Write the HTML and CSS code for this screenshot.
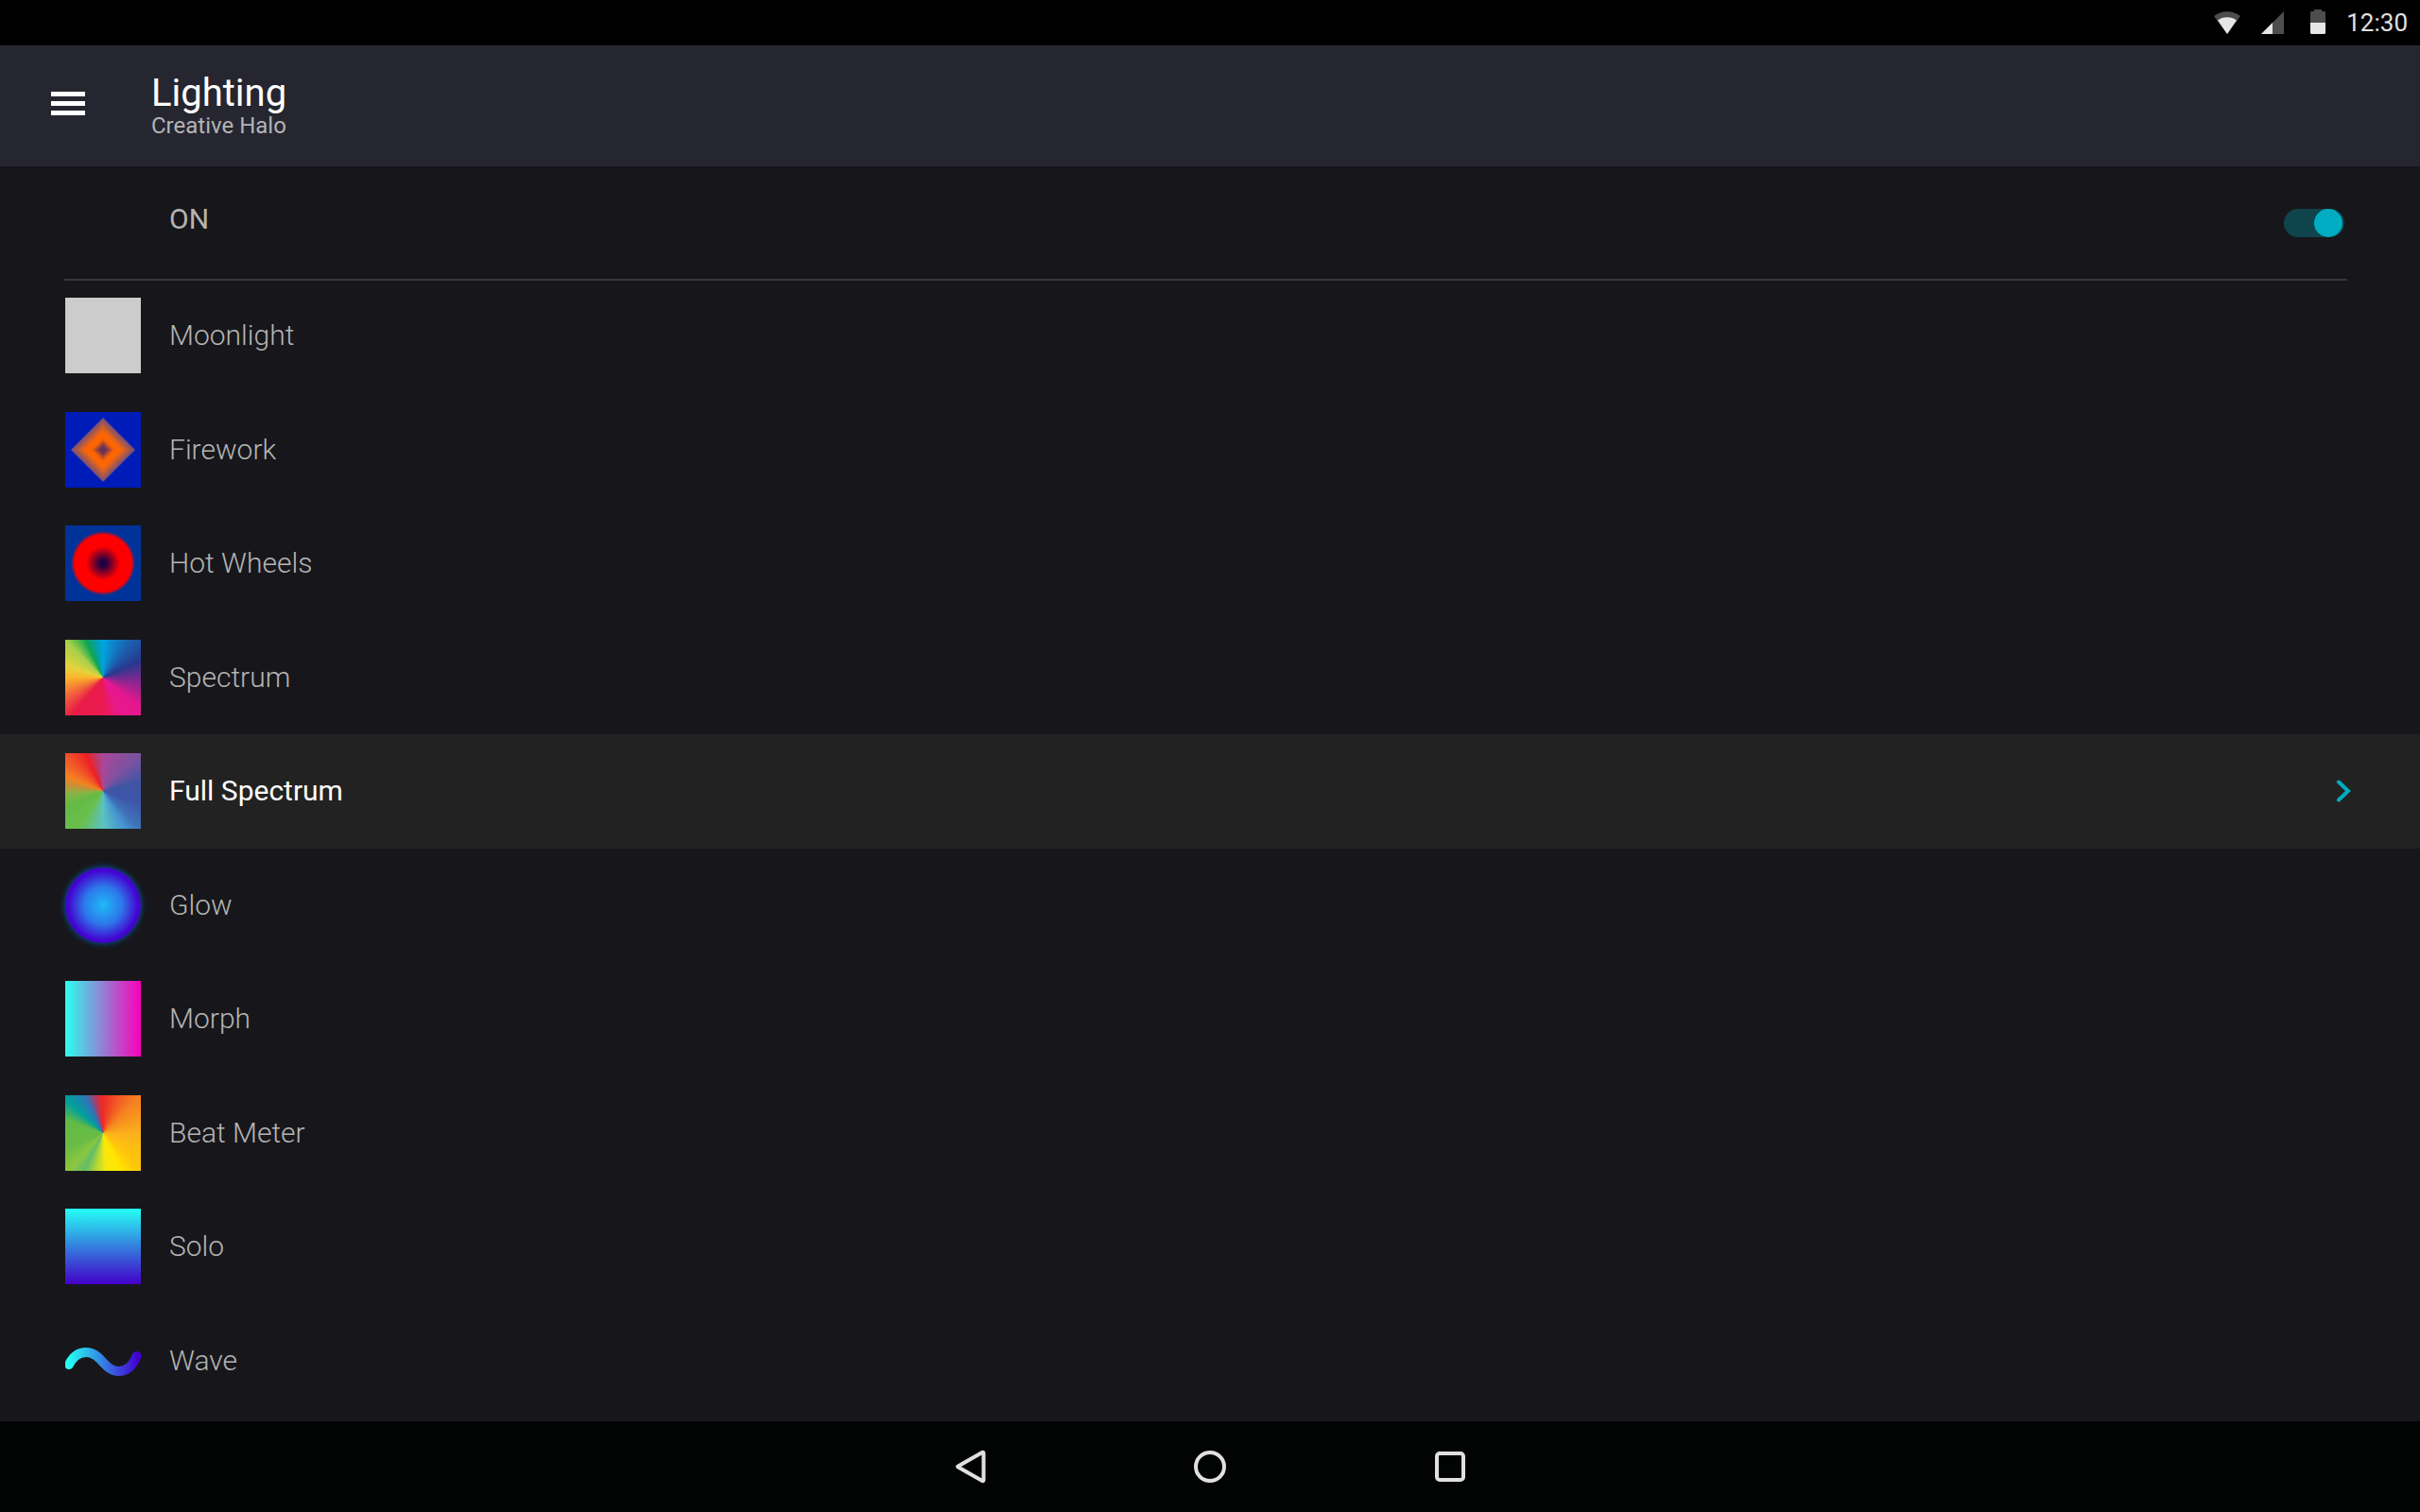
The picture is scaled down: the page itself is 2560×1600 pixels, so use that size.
FILE: index.html
```html
<!DOCTYPE html>
<html lang="en">
<head>
    <meta charset="UTF-8">
    <meta name="viewport" content="width=device-width, initial-scale=1.0">
    <title>Lighting - Creative Halo</title>
    <link rel="stylesheet" href="styles.css">
</head>
<body>
    <div class="status-bar">
        <svg class="wifi" width="28" height="24" viewBox="0 0 28 24">
            <path fill="#4d4d4d" d="M14 24 0 5C8-1.500 20-1.500 28 5z"/>
            <path fill="#e6e6e6" d="M14 24 4 9.500C9 5 19 5 24 9.500z"/>
        </svg>
        <svg class="signal" width="24" height="24" viewBox="0 0 24 24">
            <path fill="#4d4d4d" d="M24 0v24H0z"/>
            <path fill="#e6e6e6" d="M12 12v12H0z"/>
        </svg>
        <svg class="battery" width="16" height="26" viewBox="0 0 16 26">
            <path fill="#4d4d4d" d="M4 0h8v2h3l1 1v11H0V3l1-1h3z"/>
            <path fill="#e6e6e6" d="M0 14h16v11l-1 1H1l-1-1z"/>
        </svg>
        <time>12:30</time>
    </div>

    <header class="header">
        <button type="button" class="menu-btn" aria-label="Menu">
            <svg width="36" height="30" viewBox="0 0 36 30">
                <path fill="#fff" d="M0 0h36v5H0zM0 10h36v5H0zM0 20h36v5H0z"/>
            </svg>
        </button>
        <div class="heading">
            <h1>Lighting</h1>
            <p class="subtitle">Creative Halo</p>
        </div>
    </header>

    <main>
        <div class="power">
            <label for="power">ON</label>
            <input type="checkbox" id="power" class="switch" role="switch" checked>
        </div>

        <ul class="effects">
            <li><a href="#moonlight"><span class="thumb moonlight"></span>Moonlight</a></li>
            <li><a href="#firework"><span class="thumb firework"></span>Firework</a></li>
            <li><a href="#hot-wheels"><span class="thumb hot-wheels"></span>Hot Wheels</a></li>
            <li><a href="#spectrum"><span class="thumb spectrum"></span>Spectrum</a></li>
            <li>
                <a href="#full-spectrum" class="active" aria-current="true">
                    <span class="thumb full-spectrum"></span>Full Spectrum
                    <svg class="chevron" width="16" height="24" viewBox="0 0 16 24">
                        <path fill="none" stroke="#00acc1" stroke-width="4" stroke-linecap="round" d="m3 2.500 10 9.500-10 9.500"/>
                    </svg>
                </a>
            </li>
            <li><a href="#glow"><span class="thumb glow"></span>Glow</a></li>
            <li><a href="#morph"><span class="thumb morph"></span>Morph</a></li>
            <li><a href="#beat-meter"><span class="thumb beat-meter"></span>Beat Meter</a></li>
            <li><a href="#solo"><span class="thumb solo"></span>Solo</a></li>
            <li>
                <a href="#wave">
                    <svg class="thumb" viewBox="0 0 80 80">
                        <defs>
                            <linearGradient id="wave" gradientUnits="userSpaceOnUse" x1="3" y1="0" x2="77" y2="0">
                                <stop offset="0" stop-color="#25fff5"/>
                                <stop offset="1" stop-color="#4300d0"/>
                            </linearGradient>
                        </defs>
                        <path fill="none" stroke="url(#wave)" stroke-width="10" stroke-linecap="round" d="M4 44C8.500 35 14 31 22 31 38 31 41 51 56.500 51 66 51 72 44 75.500 35"/>
                    </svg>
                    Wave
                </a>
            </li>
        </ul>
    </main>

    <nav class="nav-bar">
        <button type="button" aria-label="Back">
            <svg width="36" height="36" viewBox="0 0 36 36">
                <path d="M31 3 5.500 17.500q-1 .5 0 1L31 33q1.500.5 1.500-1V4q0-1.500-1.500-1z"/>
            </svg>
        </button>
        <button type="button" aria-label="Home">
            <svg width="36" height="36" viewBox="0 0 36 36">
                <circle cx="18" cy="18" r="15"/>
            </svg>
        </button>
        <button type="button" aria-label="Recent apps">
            <svg width="36" height="36" viewBox="0 0 36 36">
                <rect x="4" y="4" width="28" height="28" rx="3"/>
            </svg>
        </button>
    </nav>
</body>
</html>
```
FILE: styles.css
```css
:root {
    --bg: #17171b;
    --header-bg: #262630;
    --active-bg: #222222;
    --accent: #00acc1;
    --text: #b4b4b4;
    --light: #e0e0e0;
}

* {
    box-sizing: border-box;
}

body {
    display: flex;
    flex-direction: column;
    min-height: 100vh;
    margin: 0;
    background-color: var(--bg);
    color: var(--text);
    font-family: Roboto, sans-serif;
    font-size: 30px;
    line-height: 40px;
}

button {
    display: flex;
    align-items: center;
    justify-content: center;
    padding: 0;
    border: none;
    background: none;
    cursor: pointer;
}

/* Status bar */
.status-bar {
    display: flex;
    align-items: center;
    justify-content: flex-end;
    height: 48px;
    padding-right: 13px;
    background-color: #000;
    color: var(--light);
    font-size: 26px;
}

.signal {
    margin-left: 22px;
}

.battery {
    margin: 0 22px 2px 28px;
}

/* Header */
.header {
    display: flex;
    align-items: center;
    height: 128px;
    background-color: var(--header-bg);
}

.menu-btn {
    width: 144px;
    height: 100%;
    margin-right: 16px;
}

.heading {
    padding-top: 2px;
}

h1 {
    margin: 0;
    color: #fff;
    font-size: 40px;
    font-weight: 400;
}

.subtitle {
    margin: 0;
    font-size: 24px;
    line-height: 28px;
}

main {
    display: flex;
    flex: 1;
    flex-direction: column;
}

/* On / off row */
.power {
    display: flex;
    align-items: center;
    justify-content: space-between;
    height: 121px;
    margin: 0 77px 0 68px;
    padding: 0 3px 0 111px;
    border-bottom: 2px solid #38383c;
}

.power label {
    padding-bottom: 8px;
}

.switch {
    display: flex;
    align-items: center;
    justify-content: flex-end;
    width: 64px;
    height: 30px;
    margin: 0;
    padding: 0 2px;
    border-radius: 15px;
    background-color: #10444c;
    appearance: none;
    cursor: pointer;
}

.switch::before {
    content: "";
    width: 30px;
    height: 30px;
    border-radius: 50%;
    background-color: var(--accent);
}

.switch:not(:checked) {
    justify-content: flex-start;
}

/* Effects list */
.effects {
    display: flex;
    flex: 1;
    flex-direction: column;
    margin: -2px 0 0;
    padding: 0 0 4px;
    list-style: none;
}

.effects li {
    display: flex;
    flex: 1;
}

.effects a {
    display: flex;
    flex: 1;
    align-items: center;
    padding: 0 73px 0 69px;
    color: var(--text);
    font-weight: 300;
    text-decoration: none;
}

.effects .active {
    background-color: var(--active-bg);
    color: #fff;
    font-weight: 400;
}

.chevron {
    margin-left: auto;
}

.thumb {
    flex: none;
    width: 80px;
    height: 80px;
    margin-right: 30px;
}

.moonlight {
    background-color: #cccccc;
}

/* one gradient per quarter, together they make the diamond */
.firework {
    --fire: #652e5a 0, #6e3456 5%, #f86204 15%, #ff6600 21%, #f06410 26%, #745078 42%, #001cb8 43%;
    background:
        linear-gradient(to top left, var(--fire)) top left,
        linear-gradient(to top right, var(--fire)) top right,
        linear-gradient(to bottom left, var(--fire)) bottom left,
        linear-gradient(to bottom right, var(--fire)) bottom right;
    background-repeat: no-repeat;
    background-size: 50% 50%;
}

.hot-wheels {
    background: radial-gradient(circle, #10004c 0, #2c0040 4px, #ff0000 18px, #ff0000 30px, #003399 34px);
}

.spectrum {
    background: conic-gradient(#00a5e0 0deg, #1c5fae 38deg, #27388f 65deg, #6b2c90 88deg, #e6178f 130deg,
        #e8188c 155deg, #ea1a50 180deg, #e91c48 220deg, #f47c35 250deg, #fcb52c 270deg, #e5d33c 288deg,
        #a8d04a 315deg, #0ea650 335deg, #05a0a8 348deg, #00a5e0 360deg);
}

.full-spectrum {
    background: conic-gradient(#a9479b 0deg, #7b52a0 45deg, #4055a5 75deg, #3d56a8 110deg, #4070b8 135deg,
        #4595d0 150deg, #5cc3c0 180deg, #6abf4b 215deg, #62bb46 245deg, #85b545 265deg, #c89035 280deg,
        #f58220 292deg, #f1502a 315deg, #ed2024 335deg, #c23868 348deg, #a9479b 360deg);
}

.glow {
    border-radius: 50%;
    background: radial-gradient(circle closest-side, #1fbaf6 0, #2c78ea 50%, #4400d0 94%, #3c10c8 100%);
    box-shadow: 0 0 6px #0060c0;
}

.morph {
    background: linear-gradient(to right, #2cfff0, #fa00b8);
}

.beat-meter {
    background: conic-gradient(#ee2a28 0deg, #f58220 45deg, #fbb01c 90deg, #ffc60c 135deg, #ffe600 155deg,
        #f5e80f 175deg, #b8d832 190deg, #62bd6a 207deg, #8cc640 222deg, #6abd45 245deg, #62bb46 290deg,
        #00a19a 312deg, #2f74b8 335deg, #a04070 346deg, #ee2a28 358deg);
}

.solo {
    background: linear-gradient(#25fff5, #4300c8);
}

/* Navigation bar */
.nav-bar {
    display: flex;
    justify-content: center;
    height: 96px;
    background-color: #020303;
}

.nav-bar button {
    width: 254px;
}

.nav-bar svg {
    fill: none;
    stroke: var(--light);
    stroke-width: 4;
}
```
